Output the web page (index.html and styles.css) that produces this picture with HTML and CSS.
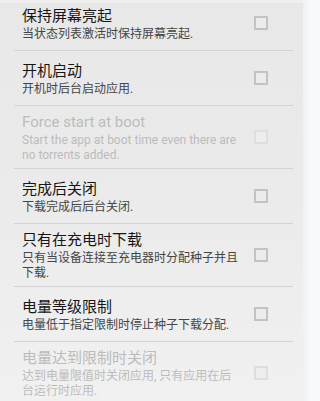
FILE: index.html
```html
<!DOCTYPE html>
<html lang="zh-CN">
<head>
<meta charset="utf-8">
<title>设置</title>
<link rel="stylesheet" href="styles.css">
</head>
<body>
<div class="screen">
  <div class="panel">
    <ul class="list">
      <li class="item">
        <div class="text">
          <div class="title">保持屏幕亮起</div>
          <div class="sub">当状态列表激活时保持屏幕亮起.</div>
        </div>
        <span class="check"></span>
      </li>
      <li class="item">
        <div class="text">
          <div class="title">开机启动</div>
          <div class="sub">开机时后台启动应用.</div>
        </div>
        <span class="check"></span>
      </li>
      <li class="item disabled">
        <div class="text">
          <div class="title">Force start at boot</div>
          <div class="sub">Start the app at boot time even there are no torrents added.</div>
        </div>
        <span class="check"></span>
      </li>
      <li class="item">
        <div class="text">
          <div class="title">完成后关闭</div>
          <div class="sub">下载完成后后台关闭.</div>
        </div>
        <span class="check"></span>
      </li>
      <li class="item">
        <div class="text">
          <div class="title">只有在充电时下载</div>
          <div class="sub">只有当设备连接至充电器时分配种子并且下载.</div>
        </div>
        <span class="check"></span>
      </li>
      <li class="item">
        <div class="text">
          <div class="title">电量等级限制</div>
          <div class="sub">电量低于指定限制时停止种子下载分配.</div>
        </div>
        <span class="check"></span>
      </li>
      <li class="item disabled">
        <div class="text">
          <div class="title">电量达到限制时关闭</div>
          <div class="sub">达到电量限值时关闭应用, 只有应用在后台运行时应用.</div>
        </div>
        <span class="check"></span>
      </li>
    </ul>
  </div>
  <div class="side"></div>
</div>
</body>
</html>
```
FILE: styles.css
```css
html, body {
  margin: 0;
  padding: 0;
  height: 100%;
  overflow: hidden;
}
body {
  font-family: Roboto, "Noto Sans CJK SC", sans-serif;
  background: #f6f8fb;
}
.screen {
  display: flex;
  height: 401px;
  overflow: hidden;
}
.panel {
  width: 303px;
  flex: none;
  background: linear-gradient(180deg, #e8e8e8 0%, #ebebeb 50%, #f1f1f1 100%);
  border-top: 3px solid #efefef;
  box-sizing: border-box;
  overflow: hidden;
}
.side {
  flex: 1;
  background: linear-gradient(90deg, #eef1f5 0%, #f6f8fb 40%, #f8fafc 100%);
}
.list {
  list-style: none;
  margin: -7px 10px 0 14px;
  padding: 0;
}
.item {
  display: flex;
  align-items: center;
  box-sizing: border-box;
  min-height: 55px;
  padding: 5px 25px 5px 8px;
  border-bottom: 1px solid #d3d3d3;
}
.text {
  flex: 1;
  margin-right: 12px;
  min-width: 0;
}
.title {
  font-size: 15px;
  line-height: 22px;
  color: #161616;
}
.sub {
  font-size: 12px;
  line-height: 15px;
  color: #454545;
}
.check {
  flex: none;
  width: 14px;
  height: 14px;
  box-sizing: border-box;
  border: 2px solid #c3c3c3;
  background: #ececec;
}
.disabled .title,
.disabled .sub {
  color: #bcbcbc;
}
.disabled .check {
  border-color: #dedede;
  background: #eeeeee;
}
```
